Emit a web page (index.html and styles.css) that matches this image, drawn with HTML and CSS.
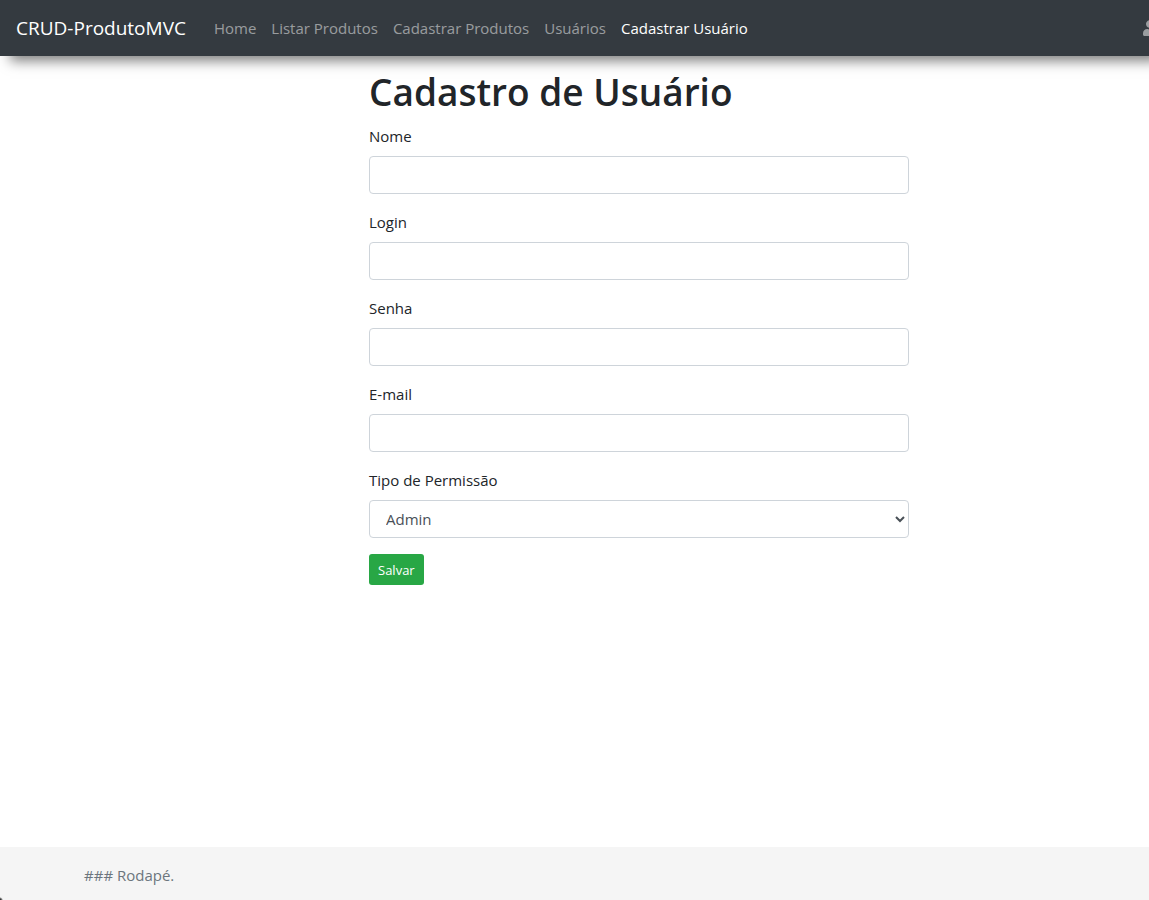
FILE: index.html
```html
<!DOCTYPE html>
<html lang="pt-BR">
<head>
<meta charset="utf-8">
<meta name="viewport" content="width=device-width, initial-scale=1">
<title>Cadastrar Usuário - CRUD-ProdutoMVC</title>
<link rel="stylesheet" href="styles.css">
</head>
<body>
<header class="navbar">
  <a class="brand" href="#">CRUD-ProdutoMVC</a>
  <nav class="nav-links">
    <a href="#">Home</a>
    <a href="#">Listar Produtos</a>
    <a href="#">Cadastrar Produtos</a>
    <a href="#">Usuários</a>
    <a class="active" href="#" aria-current="page">Cadastrar Usuário</a>
  </nav>
  <a class="account" href="#" aria-label="Conta">
    <svg width="14" height="16" viewBox="0 0 448 512" aria-hidden="true"><path fill="currentColor" d="M224 256c70.700 0 128-57.300 128-128S294.700 0 224 0 96 57.300 96 128s57.300 128 128 128zm89.600 32h-16.700c-22.200 10.200-46.900 16-72.900 16s-50.600-5.800-72.900-16h-16.700C60.200 288 0 348.200 0 422.400V464c0 26.500 21.500 48 48 48h352c26.500 0 48-21.500 48-48v-41.600c0-74.200-60.200-134.400-134.400-134.400z"/></svg>
  </a>
</header>
<main class="content">
  <form class="user-form">
    <h1>Cadastro de Usuário</h1>
    <div class="field"><label for="nome">Nome</label><input class="control" id="nome" type="text"></div>
    <div class="field"><label for="login">Login</label><input class="control" id="login" type="text"></div>
    <div class="field"><label for="senha">Senha</label><input class="control" id="senha" type="password"></div>
    <div class="field"><label for="email">E-mail</label><input class="control" id="email" type="email"></div>
    <div class="field"><label for="permissao">Tipo de Permissão</label>
      <select class="control" id="permissao"><option>Admin</option></select></div>
    <button class="save" type="button">Salvar</button>
  </form>
</main>
<footer class="footer"><span>### Rodapé.</span></footer>
</body>
</html>
```
FILE: styles.css
```css
*, *::before, *::after { box-sizing: border-box; }

body {
  margin: 0;
  min-height: 100vh;
  display: flex;
  flex-direction: column;
  overflow-x: hidden;
  background: #fff;
  color: #212529;
  font-family: "Segoe UI", "Open Sans", "Noto Sans", sans-serif;
  font-size: 15px;
  line-height: 24px;
}

.navbar {
  display: flex;
  align-items: center;
  height: 56px;
  padding-left: 16px;
  background: #343a40;
  box-shadow: 10px 5px 12px rgba(0, 0, 0, .5);
}

.navbar a { text-decoration: none; white-space: nowrap; }

.brand {
  margin-right: 28px;
  color: #fff;
  font-size: 19px;
}

.nav-links { display: flex; gap: 15px; }
.nav-links a, .account { color: rgba(255, 255, 255, .5); }
.nav-links .active { color: #fff; }

.account {
  display: flex;
  margin-left: auto;
  margin-right: -8px;
}

.content {
  flex: 1;
  padding: 12px 16px 32px 369px;
}

.user-form { max-width: 540px; }

h1 {
  margin: 0 0 8px;
  font-size: 37px;
  font-weight: 600;
  line-height: 48px;
}

.field { margin-bottom: 16px; }

label { display: block; margin-bottom: 8px; }

.control {
  display: block;
  width: 100%;
  height: 38px;
  padding: 6px 12px;
  border: 1px solid #ced4da;
  border-radius: 4px;
  background: #fff;
  color: #495057;
  font: inherit;
}

.save {
  display: block;
  height: 31px;
  padding: 0 9px;
  border: 0;
  border-radius: 3px;
  background: #28a745;
  color: #fff;
  font: inherit;
  font-size: 13px;
}

.footer {
  padding: 16px 84px 13px;
  background: radial-gradient(circle at 0 100%, #333 1px, transparent 3px) #f5f5f5;
  color: #6c757d;
}
```
